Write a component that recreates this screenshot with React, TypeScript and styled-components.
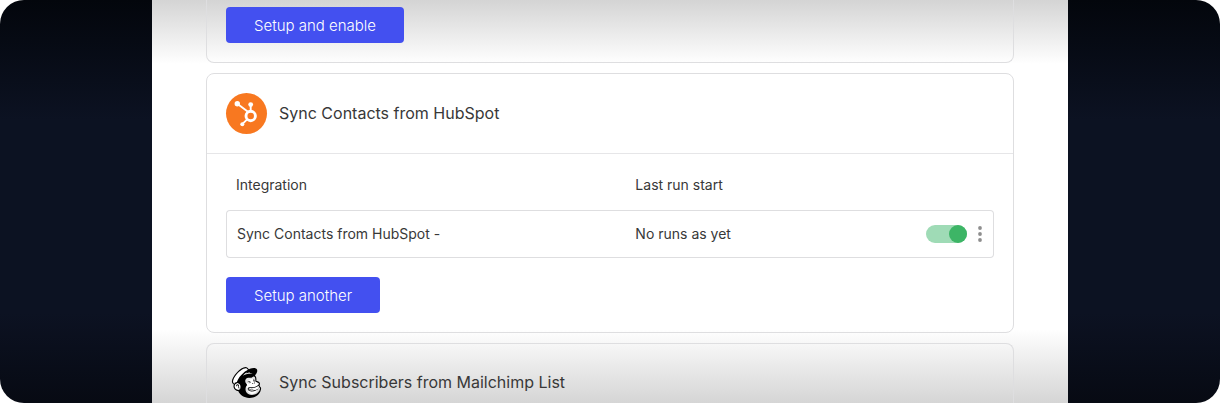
import React from "react";
import styled, { createGlobalStyle } from "styled-components";
import { SiMailchimp } from "react-icons/si";

const GlobalStyle = createGlobalStyle`
  *, *::before, *::after { box-sizing: border-box; }
  body {
    margin: 0;
    background: #fff;
    color: #383838;
    font-family: Inter, "Liberation Sans", sans-serif;
    font-size: 14px;
    line-height: 20px;
  }
`;

const Stage = styled.div`
  padding: 0 152px;
  border-radius: 24px;
  overflow: hidden;
  background: linear-gradient(180deg, #03060c 0, #0c1222 120px, #0c1222 calc(100% - 90px), #070a13 100%);
`;

const Panel = styled.main`
  display: flex;
  flex-direction: column;
  gap: 10px;
  padding: 0 54px;
  background: linear-gradient(180deg, #d4d4d4 0, #fff 64px, #fff calc(100% - 74px), #d5d5d5 100%);
`;

const Card = styled.section<{ $cut?: "top" | "bottom" }>`
  border: 1px solid #dedee0;
  border-radius: 8px;
  ${({ $cut }) => $cut === "top" && "border-top: 0; border-top-left-radius: 0; border-top-right-radius: 0;"}
  ${({ $cut }) => $cut === "bottom" && "border-bottom: 0; border-bottom-left-radius: 0; border-bottom-right-radius: 0;"}
`;

const CardHeader = styled.header<{ $last?: boolean }>`
  display: flex;
  align-items: center;
  gap: 12px;
  padding: ${({ $last }) => ($last ? "18px 19px 0" : "19px")};
  border-bottom: ${({ $last }) => ($last ? "0" : "1px solid #e6e6e8")};
`;

const CardBody = styled.div<{ $top: number }>`
  padding: ${({ $top }) => $top}px 19px 19px;
`;

const Title = styled.h2`
  margin: 0;
  padding-bottom: 2px;
  font-size: 16px;
  line-height: 24px;
  font-weight: 400;
`;

const Logo = styled.span<{ $fill?: string }>`
  display: flex;
  align-items: center;
  justify-content: center;
  width: 41px;
  height: 41px;
  border-radius: 50%;
  background: ${({ $fill }) => $fill ?? "transparent"};
`;

const Button = styled.button`
  display: block;
  height: 36px;
  padding: 1px 28px 0;
  border: 0;
  border-radius: 4px;
  background: #4350f0;
  color: #fff;
  font: inherit;
  font-size: 15px;
  font-weight: 300;
  cursor: pointer;
`;

const Table = styled.table`
  width: 100%;
  margin-bottom: 19px;
  border-collapse: separate;
  border-spacing: 0;
  table-layout: fixed;
`;

const HeadCell = styled.th<{ $width?: string }>`
  width: ${({ $width }) => $width ?? "auto"};
  height: 36px;
  padding: 0 10px 14px;
  font-weight: 400;
  text-align: left;
`;

const Cell = styled.td`
  height: 48px;
  padding: 0 10px;
  border: 1px solid #dedee0;
  border-width: 1px 0;
  &:first-child { border-left-width: 1px; border-radius: 4px 0 0 4px; }
  &:last-child { border-right-width: 1px; border-radius: 0 4px 4px 0; }
`;

const Actions = styled.div`
  display: flex;
  align-items: center;
  justify-content: flex-end;
  gap: 10px;
`;

const Toggle = styled.input`
  appearance: none;
  display: flex;
  align-items: center;
  width: 41px;
  height: 18px;
  margin: 0;
  border-radius: 9px;
  background: #d0d0d4;
  cursor: pointer;
  &::before {
    content: "";
    width: 18px;
    height: 18px;
    border-radius: 50%;
    background: #8c8c92;
  }
  &:checked { background: #9fdbb6; justify-content: flex-end; }
  &:checked::before { background: #3db566; }
`;

const MenuButton = styled.button`
  display: flex;
  padding: 0;
  border: 0;
  background: none;
  color: #8e8e8e;
  cursor: pointer;
`;

function DotsIcon() {
  return (
    <svg width="6" height="16" viewBox="0 0 6 16" fill="currentColor" aria-hidden="true">
      <circle cx="3" cy="2" r="1.9" />
      <circle cx="3" cy="8" r="1.9" />
      <circle cx="3" cy="14" r="1.9" />
    </svg>
  );
}

function HubSpotIcon() {
  return (
    <svg width="41" height="41" viewBox="0 0 41 41" fill="#fff" stroke="#fff" aria-hidden="true">
      <path d="M11.3 10.8 21.6 18.6M24.7 12v6M16.3 31.2l4.6-4.6" fill="none" strokeWidth="1.9" />
      <circle cx="24.7" cy="23" r="4.7" fill="none" strokeWidth="2.9" />
      <circle cx="11.3" cy="10.7" r="2.7" stroke="none" />
      <circle cx="24.7" cy="11.6" r="2.4" stroke="none" />
      <circle cx="16.3" cy="31.2" r="2" stroke="none" />
    </svg>
  );
}

function MailchimpIcon() {
  return (
    <svg width="31" height="31" viewBox="0 0 24 24" aria-hidden="true">
      <path d="M1.6 11C2.5 6 8 .8 12.5.8L16 2 9 7 4 12Z" fill="#fff" />
      <ellipse cx="16.5" cy="15" rx="4.5" ry="6" fill="#fff" />
      <circle cx="4.6" cy="14.6" r="2.4" fill="#fff" />
      <SiMailchimp size={24} color="#000" />
    </svg>
  );
}

export default function App() {
  return (
    <>
      <GlobalStyle />
      <Stage>
        <Panel>
          <Card $cut="top">
            <CardBody $top={7}>
              <Button type="button">Setup and enable</Button>
            </CardBody>
          </Card>
          <Card>
            <CardHeader>
              <Logo $fill="#f87820">
                <HubSpotIcon />
              </Logo>
              <Title>Sync Contacts from HubSpot</Title>
            </CardHeader>
            <CardBody $top={20}>
              <Table>
                <thead>
                  <tr>
                    <HeadCell scope="col" $width="52%">Integration</HeadCell>
                    <HeadCell scope="col">Last run start</HeadCell>
                    <HeadCell scope="col" $width="80px" aria-label="Actions" />
                  </tr>
                </thead>
                <tbody>
                  <tr>
                    <Cell>Sync Contacts from HubSpot -</Cell>
                    <Cell>No runs as yet</Cell>
                    <Cell>
                      <Actions>
                        <Toggle type="checkbox" role="switch" defaultChecked aria-label="Enable integration" />
                        <MenuButton type="button" aria-label="More options">
                          <DotsIcon />
                        </MenuButton>
                      </Actions>
                    </Cell>
                  </tr>
                </tbody>
              </Table>
              <Button type="button">Setup another</Button>
            </CardBody>
          </Card>
          <Card $cut="bottom">
            <CardHeader $last>
              <Logo>
                <MailchimpIcon />
              </Logo>
              <Title>Sync Subscribers from Mailchimp List</Title>
            </CardHeader>
          </Card>
        </Panel>
      </Stage>
    </>
  );
}
